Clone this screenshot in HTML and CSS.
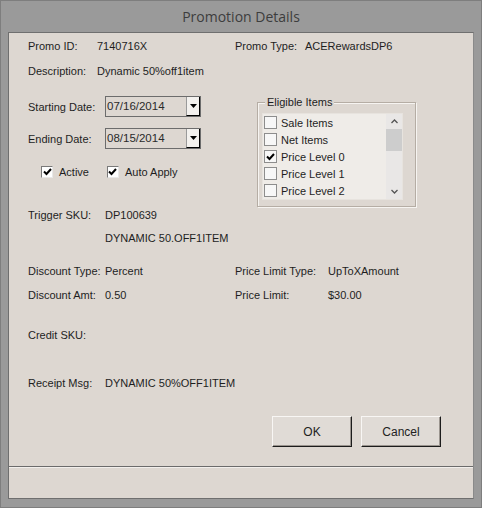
FILE: index.html
```html
<!DOCTYPE html>
<html>
<head>
<meta charset="utf-8">
<link rel="stylesheet" href="styles.css">
</head>
<body>
<div class="window">
  <div class="titlebar">Promotion Details</div>
  <div class="client">
    <div class="content">
      <div class="row r-promo">
        <span class="lbl w69">Promo ID:</span><span class="val w138">7140716X</span>
        <span class="lbl w70">Promo Type:</span><span class="val">ACERewardsDP6</span>
      </div>
      <div class="row r-desc">
        <span class="lbl w69">Description:</span><span class="val">Dynamic 50%off1item</span>
      </div>
      <div class="mid">
        <div class="leftcol">
          <div class="daterow">
            <span class="lbl w77">Starting Date:</span>
            <div class="datebox"><span class="datetext">07/16/2014</span><span class="ddbtn"><svg width="7" height="4" viewBox="0 0 7 4"><path d="M0 0h7L3.5 4z" fill="#000"/></svg></span></div>
          </div>
          <div class="daterow r-end">
            <span class="lbl w77">Ending Date:</span>
            <div class="datebox"><span class="datetext">08/15/2014</span><span class="ddbtn"><svg width="7" height="4" viewBox="0 0 7 4"><path d="M0 0h7L3.5 4z" fill="#000"/></svg></span></div>
          </div>
          <div class="checkrow">
            <span class="cb"><svg width="9" height="8" viewBox="0 0 9 8"><path d="M1 3.5l2.5 2.5L8 1" fill="none" stroke="#000" stroke-width="2"/></svg></span><span class="cbl">Active</span>
            <span class="cb cb2"><svg width="9" height="8" viewBox="0 0 9 8"><path d="M1 3.5l2.5 2.5L8 1" fill="none" stroke="#000" stroke-width="2"/></svg></span><span class="cbl">Auto Apply</span>
          </div>
        </div>
        <div class="group">
          <span class="legend">Eligible Items</span>
          <div class="listbox">
            <div class="items">
              <div class="item"><span class="lcb"></span>Sale Items</div>
              <div class="item"><span class="lcb"></span>Net Items</div>
              <div class="item"><span class="lcb"><svg width="9" height="8" viewBox="0 0 9 8"><path d="M1 3.5l2.5 2.5L8 1" fill="none" stroke="#000" stroke-width="2"/></svg></span>Price Level 0</div>
              <div class="item"><span class="lcb"></span>Price Level 1</div>
              <div class="item"><span class="lcb"></span>Price Level 2</div>
            </div>
            <div class="scrollbar">
              <span class="arrow"><svg width="7" height="5" viewBox="0 0 7 5"><path d="M0.5 4L3.5 1l3 3" fill="none" stroke="#555" stroke-width="1.3"/></svg></span>
              <span class="thumb"></span>
              <span class="track"></span>
              <span class="arrow"><svg width="7" height="5" viewBox="0 0 7 5"><path d="M0.5 1l3 3 3-3" fill="none" stroke="#555" stroke-width="1.3"/></svg></span>
            </div>
          </div>
        </div>
      </div>
      <div class="row r-trig">
        <span class="lbl w77">Trigger SKU:</span><span class="val">DP100639</span>
      </div>
      <div class="row r-dyn">
        <span class="lbl w77"></span><span class="val">DYNAMIC 50.OFF1ITEM</span>
      </div>
      <div class="row r-dtype">
        <span class="lbl w77">Discount Type:</span><span class="val w130">Percent</span>
        <span class="lbl w93">Price Limit Type:</span><span class="val">UpToXAmount</span>
      </div>
      <div class="row r-damt">
        <span class="lbl w77">Discount Amt:</span><span class="val w130">0.50</span>
        <span class="lbl w93">Price Limit:</span><span class="val">$30.00</span>
      </div>
      <div class="row r-credit">
        <span class="lbl w77">Credit SKU:</span>
      </div>
      <div class="row r-receipt">
        <span class="lbl w77">Receipt Msg:</span><span class="val">DYNAMIC 50%OFF1ITEM</span>
      </div>
      <div class="buttons">
        <button class="btn">OK</button>
        <button class="btn">Cancel</button>
      </div>
    </div>
    <div class="statusbar"></div>
  </div>
</div>
</body>
</html>
```

FILE: styles.css
```css
html, body {
  margin: 0;
  padding: 0;
}
body {
  width: 482px;
  height: 508px;
  overflow: hidden;
  font-family: "Liberation Sans", Arial, sans-serif;
  font-size: 11px;
  color: #1e1e1e;
}
.window {
  width: 482px;
  height: 508px;
  box-sizing: border-box;
  background: #9a9a9a;
  border: 1px solid #7e7e7e;
  padding: 0 7px 8px 7px;
  display: flex;
  flex-direction: column;
}
.titlebar {
  height: 31px;
  line-height: 31px;
  text-align: center;
  font-family: "Open Sans", "Noto Sans", sans-serif;
  font-size: 14px;
  color: #3d3d3d;
  flex: none;
}
.client {
  flex: 1;
  background: #ddd7d1;
  border: 1px solid #6f6f6f;
  border-right-color: #8a8a8a;
  display: flex;
  flex-direction: column;
}
.content {
  flex: 1;
  padding: 5px 0 0 19px;
  display: flex;
  flex-direction: column;
}
.row {
  height: 16px;
  display: flex;
  align-items: center;
  white-space: nowrap;
}
.lbl, .val {
  display: inline-block;
  flex: none;
}
.w69 { width: 69px; }
.w70 { width: 70px; }
.w77 { width: 77px; }
.w93 { width: 93px; }
.w130 { width: 130px; }
.w138 { width: 138px; }
.r-desc { margin-top: 9px; }
.mid {
  margin-top: 17px;
  display: flex;
  align-items: flex-start;
}
.leftcol {
  width: 229px;
  flex: none;
}
.daterow {
  height: 21px;
  display: flex;
  align-items: center;
}
.r-end { margin-top: 11px; }
.datebox {
  width: 96px;
  height: 21px;
  box-sizing: border-box;
  border: 1px solid #6c6c6c;
  display: flex;
  align-items: stretch;
  background: #ddd7d1;
}
.datetext {
  flex: 1;
  padding-left: 1px;
  font-size: 11.5px;
  line-height: 19px;
  color: #2a2a2a;
}
.ddbtn {
  width: 14px;
  box-sizing: border-box;
  background: #f3f1ee;
  border-left: 1px solid #9a9a9a;
  border-right: 1px solid #000;
  border-bottom: 1px solid #000;
  display: flex;
  align-items: center;
  justify-content: center;
  margin: 0 0 0 0;
}
.checkrow {
  margin-top: 15px;
  height: 16px;
  display: flex;
  align-items: center;
  padding-left: 13px;
}
.cb, .lcb {
  width: 12px;
  height: 12px;
  box-sizing: border-box;
  background: #fff;
  border-top: 1px solid #7a7a7a;
  border-left: 1px solid #7a7a7a;
  border-right: 1px solid #e8e8e8;
  border-bottom: 1px solid #e8e8e8;
  display: inline-flex;
  align-items: center;
  justify-content: center;
  flex: none;
}
.cbl {
  margin-left: 6px;
}
.cb2 {
  margin-left: 18px;
}
.group {
  position: relative;
  margin-top: 6px;
  width: 159px;
  height: 105px;
  box-sizing: border-box;
  border: 1px solid #b5ada4;
  box-shadow: inset 1px 1px 0 #f6f4f1, 1px 1px 0 #f6f4f1;
  padding: 10px 0 0 4px;
}
.legend {
  position: absolute;
  left: 7px;
  top: -8px;
  padding: 0 2px;
  background: #ddd7d1;
  line-height: 14px;
}
.listbox {
  width: 141px;
  height: 87px;
  box-sizing: border-box;
  border: 1px solid #e7e3de;
  background: #efece8;
  display: flex;
}
.items {
  flex: 1;
}
.item {
  height: 17px;
  display: flex;
  align-items: center;
  padding-left: 1px;
  white-space: nowrap;
}
.lcb {
  width: 13px;
  height: 13px;
  margin-right: 4px;
  border: 1px solid #8d8d8d;
  background: #f7f7f7;
}
.scrollbar {
  width: 16px;
  flex: none;
  background: #e9e7e6;
  display: flex;
  flex-direction: column;
}
.arrow {
  height: 15px;
  display: flex;
  align-items: center;
  justify-content: center;
}
.thumb {
  height: 22px;
  background: #cdcdcd;
}
.track {
  flex: 1;
}
.r-trig { margin-top: 0; }
.r-dyn { margin-top: 7px; }
.r-dtype { margin-top: 17px; }
.r-damt { margin-top: 8px; }
.r-credit { margin-top: 24px; }
.r-receipt { margin-top: 32px; }
.buttons {
  margin-top: 25px;
  display: flex;
  justify-content: flex-end;
  gap: 9px;
  padding-right: 32px;
}
.btn {
  width: 80px;
  height: 31px;
  box-sizing: border-box;
  margin: 0;
  padding: 0;
  font-family: "Liberation Sans", Arial, sans-serif;
  font-size: 12px;
  color: #222;
  background: #e0dbd6;
  border: 1px solid;
  border-color: #f8f6f4 #1c1c1c #1c1c1c #f8f6f4;
  box-shadow: inset -1px -1px 0 #9a948e;
}
.statusbar {
  height: 31px;
  border-top: 1px solid #6b6b6b;
  box-shadow: inset 0 1px 0 #f2efec;
  flex: none;
}
```
